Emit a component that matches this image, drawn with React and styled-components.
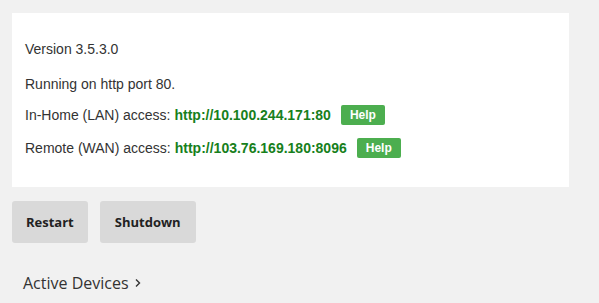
import styled, { createGlobalStyle } from "styled-components";

const GlobalStyle = createGlobalStyle`
  html, body {
    margin: 0;
    background: #f1f1f1;
  }
`;

const Page = styled.div`
  padding: 13px 30px 0 12px;
  font-family: "Liberation Sans", Arial, sans-serif;
  color: #333333;
`;

const Panel = styled.div`
  width: 557px;
  height: 174px;
  box-sizing: border-box;
  background: #ffffff;
  padding: 26px 13px 0 13px;
  display: flex;
  flex-direction: column;
`;

const Line = styled.div`
  display: flex;
  align-items: center;
  height: 20px;
  font-size: 14px;
  margin-bottom: ${(p) => p.space || 0}px;
`;

const Link = styled.span`
  font-weight: bold;
  color: #17801c;
  margin-left: 4px;
`;

const HelpButton = styled.span`
  display: inline-flex;
  align-items: center;
  justify-content: center;
  width: 44px;
  height: 20px;
  margin-left: 10px;
  border-radius: 2px;
  background: #4cae4f;
  color: #ffffff;
  font-size: 12px;
  font-weight: bold;
`;

const ButtonRow = styled.div`
  display: flex;
  gap: 12px;
  margin-top: 14px;
`;

const Button = styled.button`
  height: 42px;
  padding: 0 ${(p) => p.pad || 14}px;
  border: none;
  border-radius: 3px;
  background: #d9d9d9;
  color: #222222;
  font-family: "Open Sans", sans-serif;
  font-size: 13px;
  font-weight: bold;
`;

const Section = styled.div`
  margin-top: 29px;
  padding-left: 11px;
  font-family: "Open Sans", sans-serif;
  font-size: 16px;
  line-height: 22px;
  color: #333333;
  display: flex;
  align-items: center;
  gap: 5px;
`;

const App = () => {
  return (
    <>
      <GlobalStyle />
      <Page>
        <Panel>
          <Line space={15}>Version 3.5.3.0</Line>
          <Line space={11}>Running on http port 80.</Line>
          <Line space={13}>
            In-Home (LAN) access:<Link>http://10.100.244.171:80</Link>
            <HelpButton>Help</HelpButton>
          </Line>
          <Line>
            Remote (WAN) access:<Link>http://103.76.169.180:8096</Link>
            <HelpButton>Help</HelpButton>
          </Line>
        </Panel>
        <ButtonRow>
          <Button>Restart</Button>
          <Button pad={15}>Shutdown</Button>
        </ButtonRow>
        <Section>
          Active Devices
          <svg width="8" height="10" viewBox="0 0 8 10">
            <path d="M2 1.5 L5.5 5 L2 8.5" fill="none" stroke="#333" strokeWidth="1.4" />
          </svg>
        </Section>
      </Page>
    </>
  );
};

export default App;
